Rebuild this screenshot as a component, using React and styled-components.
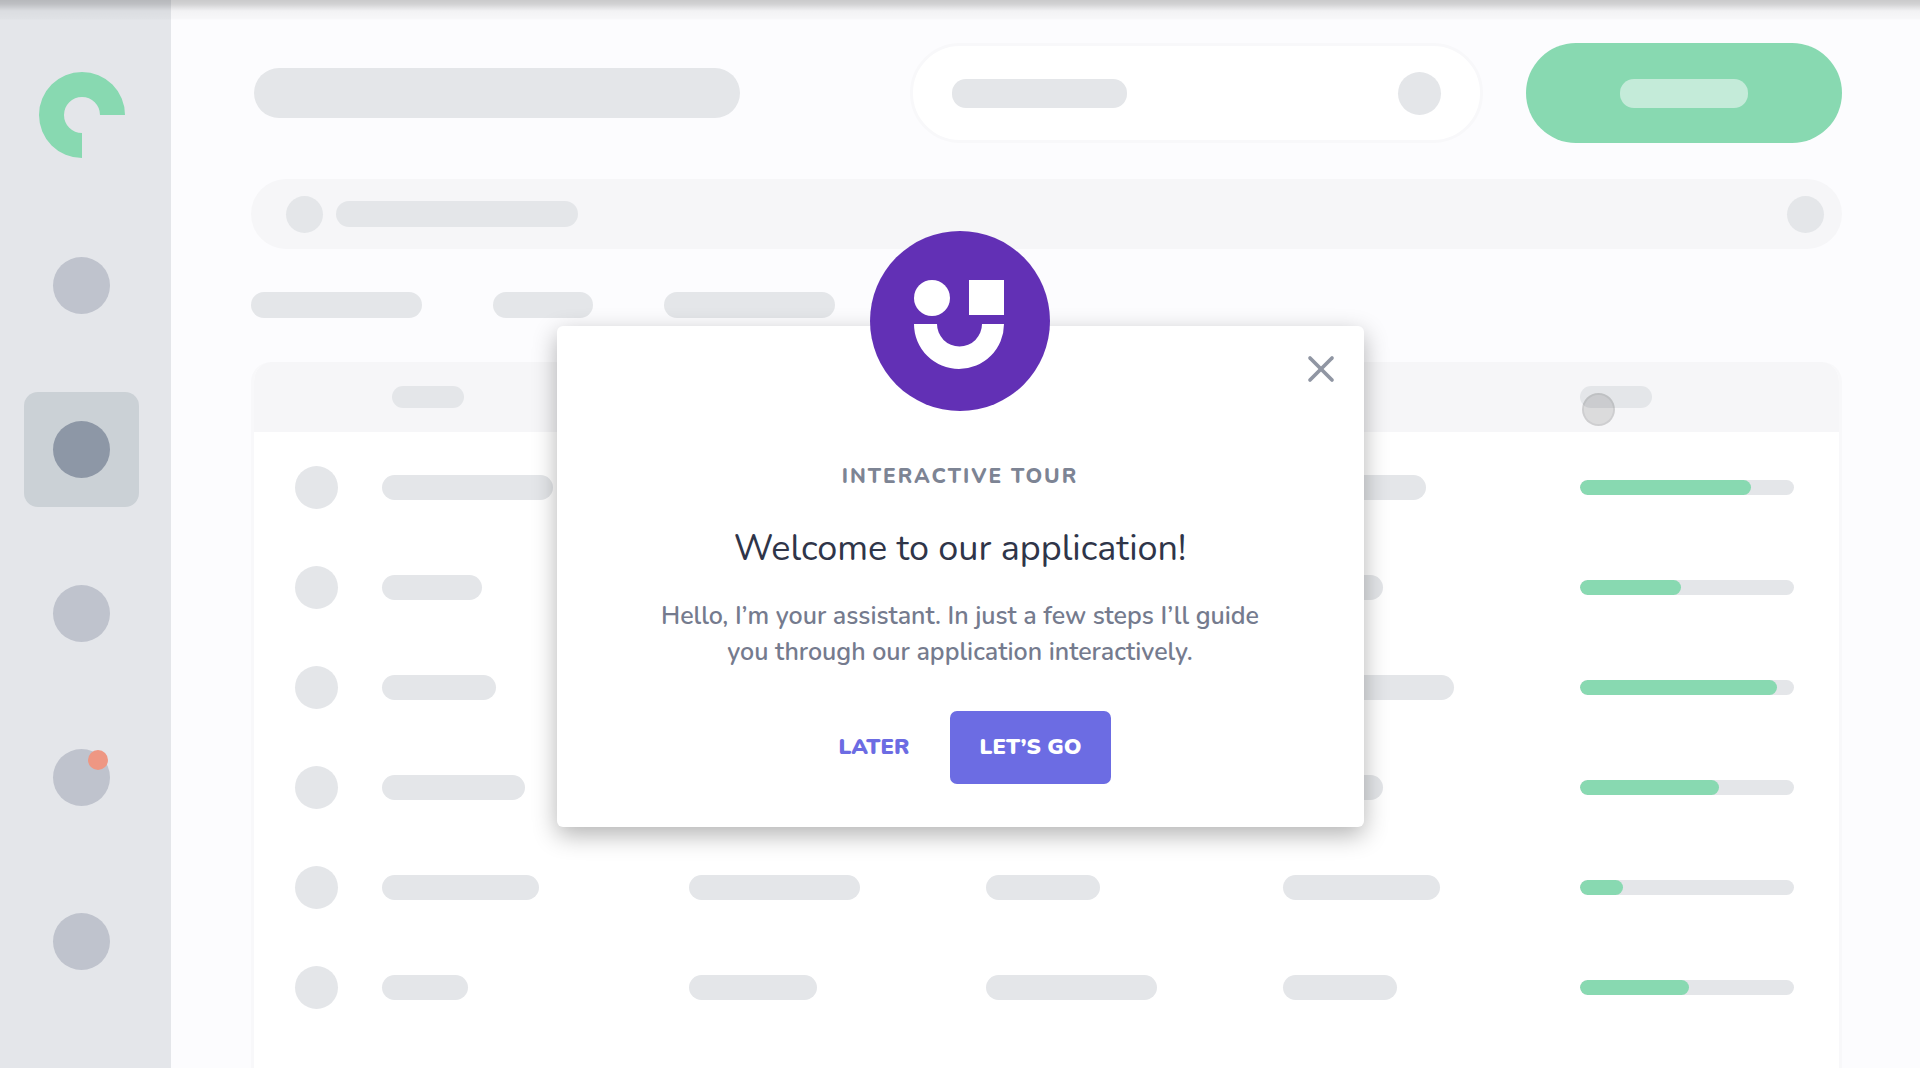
import React from 'react';
import styled, { createGlobalStyle } from 'styled-components';
import { X } from 'lucide-react';

const navItems = [
  { label: 'Home' },
  { label: 'Users', active: true },
  { label: 'Reports' },
  { label: 'Messages', alert: true },
  { label: 'Settings' },
];

const rows = [
  { cells: [171, 128, 114, 143], progress: 80 },
  { cells: [100, 171, 128, 100], progress: 47 },
  { cells: [114, 143, 100, 171], progress: 92 },
  { cells: [143, 114, 157, 100], progress: 65 },
  { cells: [157, 171, 114, 157], progress: 20 },
  { cells: [86, 128, 171, 114], progress: 51 },
];

const Logo = () => (
  <svg width="86" height="86" viewBox="0 0 86 86" aria-hidden="true">
    <path
      d="M86 43A43 43 0 1 0 43 86V61A18 18 0 1 1 61 43Z"
      fill="#88d9b1"
    />
  </svg>
);

const Face = () => (
  <svg width="180" height="180" viewBox="0 0 180 180" aria-hidden="true">
    <circle cx="90" cy="90" r="90" fill="#6230b5" />
    <circle cx="62" cy="67" r="18" fill="#fff" />
    <rect x="99" y="49" width="35" height="35" fill="#fff" />
    <path
      d="M44 93H67A22.5 22.5 0 0 0 112 93H134A45 45 0 0 1 44 93Z"
      fill="#fff"
    />
  </svg>
);

const TourDialog = () => (
  <Overlay>
    <Dialog role="dialog" aria-labelledby="tour-title">
      <Mascot>
        <Face />
      </Mascot>
      <CloseButton type="button" aria-label="Close">
        <X size={44} strokeWidth={2} />
      </CloseButton>
      <Eyebrow>INTERACTIVE TOUR</Eyebrow>
      <Title id="tour-title">Welcome to our application!</Title>
      <Message>
        Hello, I’m your assistant. In just a few steps I’ll guide
        <br />
        you through our application interactively.
      </Message>
      <Actions>
        <ActionButton type="button">LATER</ActionButton>
        <ActionButton type="button" $primary>LET’S GO</ActionButton>
      </Actions>
    </Dialog>
  </Overlay>
);

const App = () => {
  return (
    <>
      <GlobalStyle />
      <Page>
        <Sidebar>
          <Logo />
          <Nav>
            {navItems.map((item) => (
              <NavButton
                key={item.label}
                type="button"
                aria-label={item.label}
                $active={item.active}
              >
                <NavDot $active={item.active} />
                {item.alert && <Alert />}
              </NavButton>
            ))}
          </Nav>
        </Sidebar>

        <Main>
          <TopBar>
            <Heading />
            <SearchBox>
              <Bar $width={175} $height={29} />
              <Dot $size={43} />
            </SearchBox>
            <AddButton type="button" aria-label="Add">
              <Bar $width={128} $height={29} $color="#c4ebd9" />
            </AddButton>
          </TopBar>

          <FilterBar>
            <Dot $size={37} />
            <Bar $width={242} $height={26} />
            <Dot $size={37} />
          </FilterBar>

          <Tabs>
            <Bar $width={171} $height={26} />
            <Bar $width={100} $height={26} />
            <Bar $width={171} $height={26} />
          </Tabs>

          <Panel>
            <Table>
              <colgroup>
                <col className="avatar" />
                <col className="name" />
                <col />
                <col />
                <col />
                <col className="progress" />
              </colgroup>
              <thead>
                <tr>
                  <th />
                  <th className="first"><Bar $width={72} $height={22} /></th>
                  <th><Bar $width={72} $height={22} /></th>
                  <th><Bar $width={72} $height={22} /></th>
                  <th><Bar $width={72} $height={22} /></th>
                  <th><Bar $width={72} $height={22} /></th>
                </tr>
              </thead>
              <tbody>
                {rows.map((row, i) => (
                  <tr key={i}>
                    <td className="avatar"><Dot $size={43} /></td>
                    {row.cells.map((width, j) => (
                      <td key={j}><Bar $width={width} $height={25} /></td>
                    ))}
                    <td className="progress">
                      <Track>
                        <Fill style={{ width: `${row.progress}%` }} />
                      </Track>
                    </td>
                  </tr>
                ))}
              </tbody>
            </Table>
          </Panel>
        </Main>

        <TopShade />
        <Pointer />
        <TourDialog />
      </Page>
    </>
  );
};

export default App;

const GlobalStyle = createGlobalStyle`
  * {
    box-sizing: border-box;
  }
  body {
    margin: 0;
    background: #fcfcfe;
    font-family: Nunito, "Noto Sans", sans-serif;
  }
  button {
    padding: 0;
    border: none;
    background: none;
    font-family: inherit;
    cursor: pointer;
  }
`;

const Page = styled.div`
  position: relative;
  display: flex;
  height: 100vh;
  overflow: hidden;
`;

const Sidebar = styled.aside`
  flex: none;
  display: flex;
  flex-direction: column;
  align-items: center;
  gap: 70px;
  width: 171px;
  padding: 72px 8px 0 0;
  background: #e4e6ea;
`;

const Nav = styled.nav`
  display: flex;
  flex-direction: column;
  gap: 49px;
`;

const NavButton = styled.button`
  position: relative;
  display: flex;
  align-items: center;
  justify-content: center;
  width: 115px;
  height: 115px;
  border-radius: 14px;
  background: ${({ $active }) => ($active ? '#cbd1d6' : 'transparent')};
`;

const NavDot = styled.span`
  width: 57px;
  height: 57px;
  border-radius: 50%;
  background: ${({ $active }) => ($active ? '#8d97a6' : '#bfc3cd')};
`;

const Alert = styled.span`
  position: absolute;
  top: 30px;
  right: 31px;
  width: 20px;
  height: 20px;
  border-radius: 50%;
  background: #ee9783;
`;

const Bar = styled.div`
  width: ${({ $width }) => $width}px;
  height: ${({ $height }) => $height}px;
  border-radius: 14px;
  background: ${({ $color }) => $color || '#e4e6e9'};
`;

const Dot = styled.div`
  flex: none;
  width: ${({ $size }) => $size}px;
  height: ${({ $size }) => $size}px;
  border-radius: 50%;
  background: #e4e6e9;
`;

const Main = styled.main`
  flex: 1;
  min-width: 0;
  display: flex;
  flex-direction: column;
  padding: 43px 78px 0 80px;
`;

const TopBar = styled.header`
  display: flex;
  align-items: center;
  gap: 43px;
  padding-left: 3px;
`;

const Heading = styled.div`
  flex: 0 1 486px;
  height: 50px;
  margin-right: auto;
  border-radius: 25px;
  background: #e4e6e9;
`;

const SearchBox = styled.div`
  flex: 0 1 573px;
  display: flex;
  align-items: center;
  justify-content: space-between;
  height: 100px;
  padding: 0 39px;
  border: 3px solid #f8f8fa;
  border-radius: 50px;
  background: #fff;
`;

const AddButton = styled.button`
  flex: 0 0 316px;
  display: flex;
  align-items: center;
  justify-content: center;
  height: 100px;
  border-radius: 50px;
  background: #88d9b1;
`;

const FilterBar = styled.div`
  display: flex;
  align-items: center;
  gap: 13px;
  height: 70px;
  margin-top: 36px;
  padding: 0 18px 0 35px;
  border-radius: 35px;
  background: #f6f6f8;
  > :last-child {
    margin-left: auto;
  }
`;

const Tabs = styled.div`
  display: flex;
  gap: 71px;
  margin-top: 43px;
`;

const Panel = styled.section`
  flex: 1;
  margin-top: 44px;
  border: 3px solid #f8f8fa;
  border-width: 0 3px;
  border-radius: 20px 20px 0 0;
  background: #fff;
  overflow: hidden;
`;

const Table = styled.table`
  width: 100%;
  table-layout: fixed;
  border-collapse: collapse;
  col.avatar {
    width: 128px;
  }
  col.name {
    width: 307px;
  }
  col.progress {
    width: 259px;
  }
  th,
  td {
    padding: 0;
  }
  th {
    height: 70px;
    background: #f6f6f8;
  }
  th.first {
    padding-left: 10px;
  }
  td {
    height: 100px;
  }
  tbody tr:first-child td {
    height: 105px;
    padding-top: 5px;
  }
  td.avatar {
    padding-left: 41px;
  }
  td.progress {
    padding-right: 45px;
  }
`;

const Track = styled.div`
  height: 15px;
  border-radius: 8px;
  background: #e4e6e9;
  overflow: hidden;
`;

const Fill = styled.div`
  height: 100%;
  border-radius: 8px;
  background: #88d9b1;
`;

const TopShade = styled.div`
  position: absolute;
  inset: 0 0 auto;
  height: 20px;
  background: linear-gradient(
    rgba(0, 0, 0, 0.2),
    rgba(0, 0, 0, 0.17) 20%,
    rgba(0, 0, 0, 0.04) 55%,
    rgba(0, 0, 0, 0.02) 95%,
    transparent
  );
`;

const Pointer = styled.div`
  position: absolute;
  top: 393px;
  left: 1582px;
  width: 33px;
  height: 33px;
  border: 2px solid rgba(0, 0, 0, 0.06);
  border-radius: 50%;
  background: rgba(0, 0, 0, 0.11);
`;

const Overlay = styled.div`
  position: absolute;
  inset: 0;
  display: flex;
  align-items: center;
  justify-content: center;
  padding-top: 84px;
`;

const Dialog = styled.div`
  position: relative;
  display: flex;
  flex-direction: column;
  align-items: center;
  width: 807px;
  padding: 134px 40px 43px;
  border-radius: 6px;
  background: #fff;
  box-shadow: 0 8px 24px rgba(0, 0, 0, 0.3);
  text-align: center;
`;

const Mascot = styled.div`
  position: absolute;
  top: -95px;
  left: 50%;
  margin-left: -90px;
  svg {
    display: block;
  }
`;

const CloseButton = styled.button`
  position: absolute;
  top: 21px;
  right: 21px;
  color: #9096a3;
  svg {
    display: block;
  }
`;

const Eyebrow = styled.p`
  margin: 0;
  color: #7d8494;
  font-size: 21px;
  font-weight: 800;
  line-height: 32px;
  letter-spacing: 2px;
`;

const Title = styled.h1`
  margin: 33px 0 0;
  color: #2f3549;
  font-size: 36px;
  font-weight: 400;
  line-height: 48px;
`;

const Message = styled.p`
  margin: 25px 0 0;
  color: #757b8e;
  font-size: 25px;
  font-weight: 600;
  line-height: 36px;
`;

const Actions = styled.div`
  display: flex;
  gap: 10px;
  margin-top: 41px;
`;

const ActionButton = styled.button`
  height: 73px;
  padding: 0 30px;
  border-radius: 7px;
  background: ${({ $primary }) => ($primary ? '#6c6ce3' : 'transparent')};
  color: ${({ $primary }) => ($primary ? '#fff' : '#6c6ce3')};
  font-size: 22px;
  font-weight: 900;
`;
